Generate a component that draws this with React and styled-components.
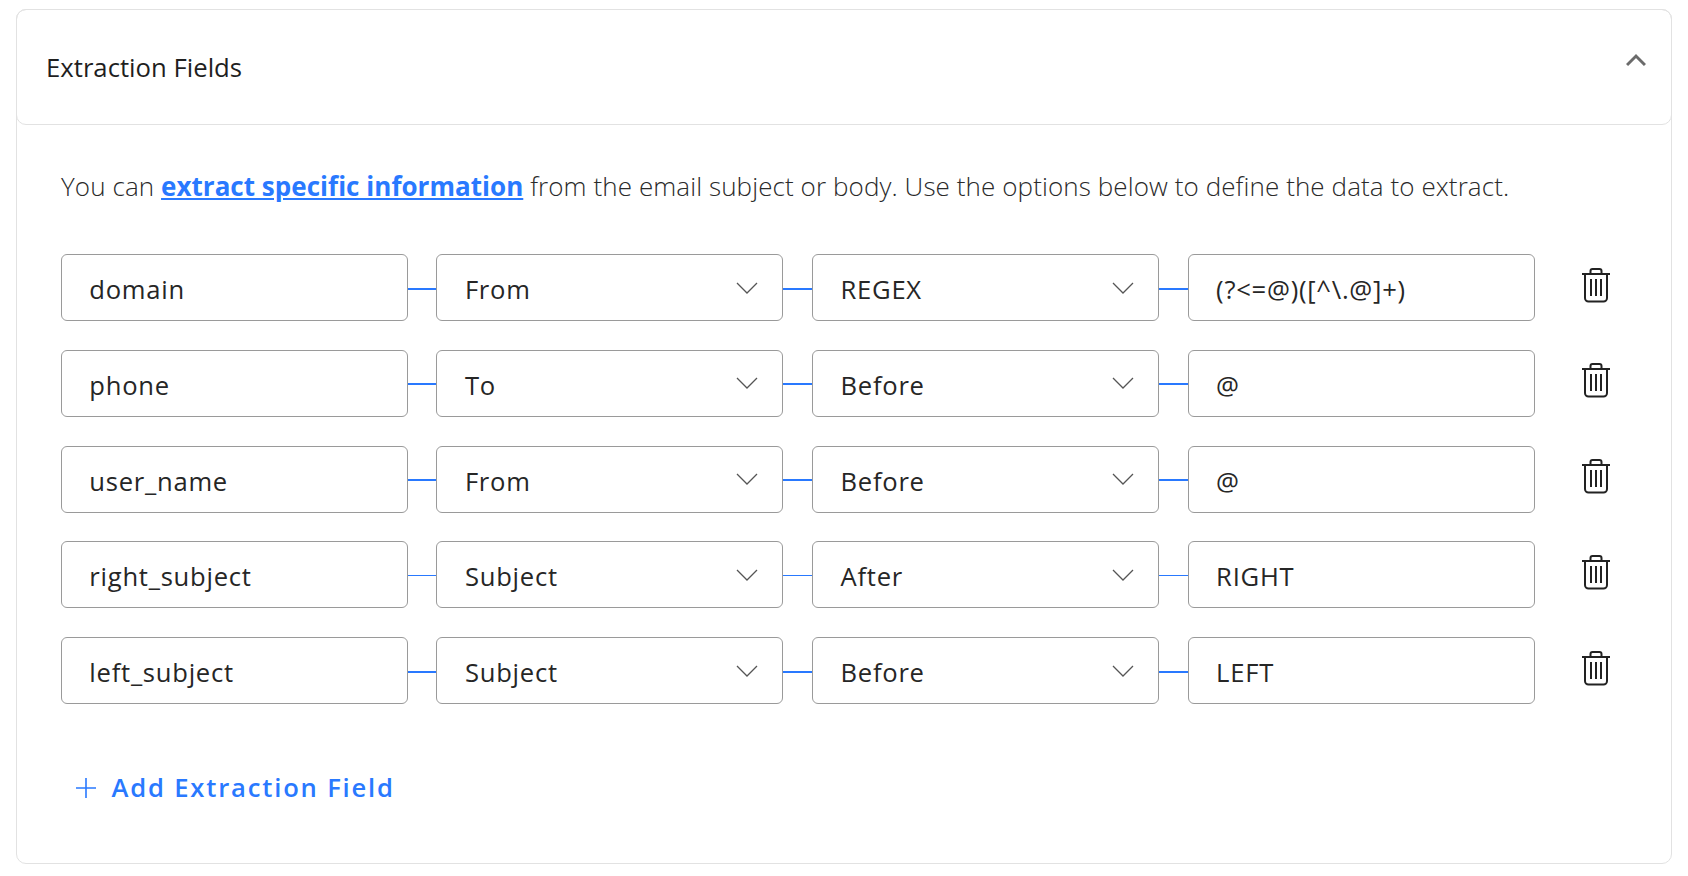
import React from 'react'
import styled, { createGlobalStyle } from 'styled-components'

const GlobalStyle = createGlobalStyle`
  html, body {
    margin: 0;
    padding: 0;
    background: #fff;
    font-family: "Open Sans", "Liberation Sans", sans-serif;
    color: #222;
  }
`

const Page = styled.div`
  width: 1688px;
  height: 876px;
  box-sizing: border-box;
  padding: 9px 16px 0;
  overflow: hidden;
`

const Card = styled.section`
  box-sizing: border-box;
  height: 855px;
  border: 1px solid #e2e2e2;
  border-radius: 10px;
`

const Header = styled.header`
  box-sizing: border-box;
  height: 116px;
  margin: -1px -1px 0;
  padding: 0 25px 0 29px;
  display: flex;
  align-items: center;
  justify-content: space-between;
  border: 1px solid #e2e2e2;
  border-radius: 10px;
`

const Title = styled.h2`
  margin: 1px 0 0;
  font-size: 25.7px;
  font-weight: 400;
  color: #1f1f1f;
`

const Collapse = styled.svg`
  width: 20px;
  height: 14px;
  margin-bottom: 15px;
  fill: none;
  stroke: #6b6b6b;
  stroke-width: 3;
`

const Body = styled.div`
  padding: 44px 0 0 44px;
`

const Intro = styled.p`
  margin: 0 0 50px;
  font-size: 26px;
  line-height: 35px;
  letter-spacing: 0.09px;
  font-weight: 300;
  color: #2a2a2a;
  white-space: nowrap;
`

const DocLink = styled.a`
  font-weight: 700;
  letter-spacing: 0.03px;
  color: #2979ff;
  text-decoration: underline;
`

const Rows = styled.div`
  margin-left: -0.2px;
  display: flex;
  flex-direction: column;
  gap: 28.75px;
`

const Row = styled.div`
  display: flex;
  align-items: center;
`

const Field = styled.div`
  box-sizing: border-box;
  width: 347px;
  height: 67px;
  padding: 4px 24px 0 27.5px;
  display: flex;
  align-items: center;
  justify-content: space-between;
  flex-shrink: 0;
  border: 1px solid #9a9a9a;
  border-radius: 6px;
  font-size: 25.6px;
  letter-spacing: 0.75px;
  color: #262626;
`

const Connector = styled.div`
  width: 28.6px;
  height: ${(props) => (props.$thin ? '1px' : '2px')};
  margin-top: 2px;
  flex-shrink: 0;
  background: #2979ff;
`

const Chevron = styled.svg`
  width: 22px;
  height: 12px;
  margin-bottom: 4px;
  fill: none;
  stroke: #555;
  stroke-width: 1.3;
`

const DeleteButton = styled.button`
  width: 30px;
  height: 36px;
  margin: -6px 0 0 46.6px;
  padding: 0;
  border: 0;
  background: none;
  color: #222;
`

const TrashIcon = styled.svg`
  display: block;
  width: 30px;
  height: 36px;
  fill: none;
  stroke: currentColor;
  stroke-width: 2;
`

const AddButton = styled.button`
  margin: 66px 0 0 14px;
  padding: 0;
  display: flex;
  align-items: center;
  gap: 14.5px;
  border: 0;
  background: none;
  font-family: inherit;
  font-size: 25.6px;
  font-weight: 600;
  letter-spacing: 1.82px;
  color: #2979ff;
`

const PlusIcon = styled.svg`
  width: 22px;
  height: 22px;
  fill: none;
  stroke: #2979ff;
  stroke-width: 1.6;
`

const rows = [
  { name: 'domain', source: 'From', rule: 'REGEX', value: '(?<=@)([^\\.@]+)' },
  { name: 'phone', source: 'To', rule: 'Before', value: '@' },
  { name: 'user_name', source: 'From', rule: 'Before', value: '@' },
  { name: 'right_subject', source: 'Subject', rule: 'After', value: 'RIGHT', thin: true },
  { name: 'left_subject', source: 'Subject', rule: 'Before', value: 'LEFT' },
]

const Select = ({ children }) => (
  <Field>
    {children}
    <Chevron viewBox="0 0 22 12">
      <path d="M1 1l10 10L21 1" />
    </Chevron>
  </Field>
)

const Trash = () => (
  <TrashIcon viewBox="0 0 30 36">
    <path d="M1 7h28" />
    <path d="M9.5 6.5V4a2 2 0 0 1 2-2h7a2 2 0 0 1 2 2v2.5" />
    <path d="M4 7v24a3.5 3.5 0 0 0 3.5 3.5h15A3.5 3.5 0 0 0 26 31V7" />
    <path d="M10 12v17M15 12v17M20 12v17" />
  </TrashIcon>
)

const App = () => {
  return (
    <Page>
      <GlobalStyle />
      <Card>
        <Header>
          <Title>Extraction Fields</Title>
          <Collapse viewBox="0 0 20 14">
            <path d="M1 12l9-9 9 9" />
          </Collapse>
        </Header>
        <Body>
          <Intro>
            You can <DocLink href="#">extract specific information</DocLink> from the email subject or body. Use the options below to define the data to extract.
          </Intro>
          <Rows>
            {rows.map((row) => (
              <Row key={row.name}>
                <Field>{row.name}</Field>
                <Connector $thin={row.thin} />
                <Select>{row.source}</Select>
                <Connector $thin={row.thin} />
                <Select>{row.rule}</Select>
                <Connector $thin={row.thin} />
                <Field>{row.value}</Field>
                <DeleteButton aria-label="Delete field">
                  <Trash />
                </DeleteButton>
              </Row>
            ))}
          </Rows>
          <AddButton>
            <PlusIcon viewBox="0 0 22 22">
              <path d="M11 1v20M1 11h20" />
            </PlusIcon>
            Add Extraction Field
          </AddButton>
        </Body>
      </Card>
    </Page>
  )
}

export default App
